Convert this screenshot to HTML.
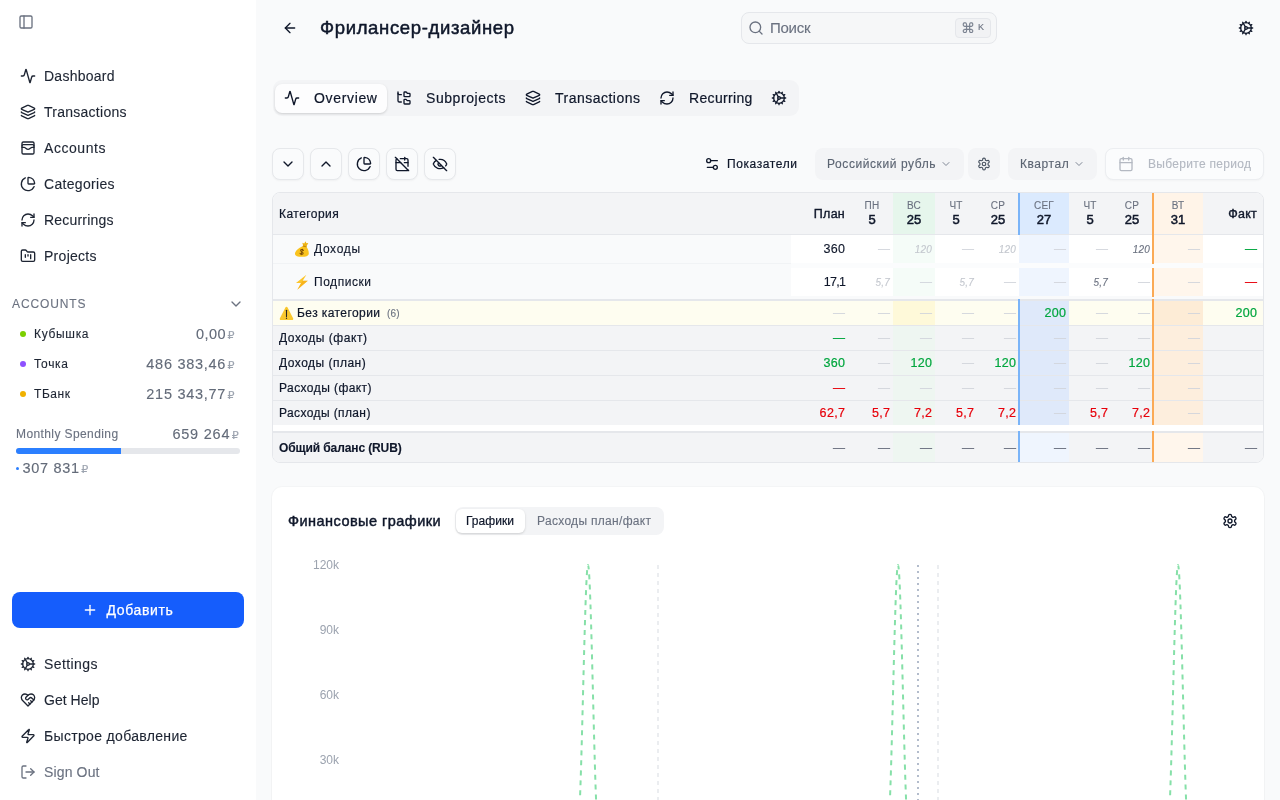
<!DOCTYPE html>
<html lang="ru">
<head>
<meta charset="utf-8">
<title>Фрилансер-дизайнер</title>
<style>
*{box-sizing:border-box;margin:0;padding:0}
html,body{width:1280px;height:800px;overflow:hidden}
#sb,#main{will-change:transform}
body{font-family:"Liberation Sans","DejaVu Sans",sans-serif;background:#f9fafb;color:#0f172a;position:relative;font-size:14px;-webkit-text-stroke:.12px}
svg.i{fill:none;stroke:currentColor;stroke-width:2;stroke-linecap:round;stroke-linejoin:round;display:block}
.abs{position:absolute}
/* sidebar */
#sb{position:absolute;left:0;top:0;width:256px;height:800px;background:#fff}
.nav{position:absolute;left:12px;width:232px;height:32px;display:flex;align-items:center;padding-left:8px;font-size:14px;color:#1e2533;white-space:nowrap}
.nav svg{width:16px;height:16px;margin-right:8px;flex:none}
.nav span{display:inline-block}
.acc{position:absolute;left:12px;width:232px;height:30px;display:flex;align-items:center;font-size:12px;color:#1e2533;white-space:nowrap}
.acc .dot{width:6px;height:6px;border-radius:50%;margin-left:8px;margin-right:8px;flex:none}
.acc .amt{margin-left:auto;margin-right:9.5px;font-size:14.5px;color:#636b79}
.rub{font-size:11px;color:#9ca3af;margin-left:1.5px;letter-spacing:0}
/* main */
#main{position:absolute;left:256px;top:0;width:1024px;height:800px;background:#f9fafb}

.med{-webkit-text-stroke:.2px currentColor}
.bold{font-weight:bold}
.tb{border:1px solid #e6e8eb;border-radius:8px;background:#fafbfc;color:#0f172a;display:flex;align-items:center;justify-content:center;box-shadow:0 1px 2px rgba(0,0,0,.04)}
.c{font-size:12px;white-space:nowrap;color:#0f172a}
.c.hb{font-size:12.5px;letter-spacing:.25px;-webkit-text-stroke:.38px currentColor;color:#0f172a}
.c.dw{font-size:10px;color:#6b7280;letter-spacing:.2px}
.c.dn{font-size:13px;-webkit-text-stroke:.5px currentColor;color:#0f172a}
.c.v{color:#0f172a;font-size:12.5px;letter-spacing:.35px;margin-left:.35px}
.c.ds{color:#d1d5db}
.c.dd{color:#6b7280;-webkit-text-stroke:.3px currentColor}
.c.dg{color:#00a63e;-webkit-text-stroke:.3px currentColor}
.c.dr{color:#e7000b;-webkit-text-stroke:.3px currentColor}
.c.g{color:#00a63e;font-size:12.5px;letter-spacing:.35px;margin-left:.35px;-webkit-text-stroke:.2px currentColor}
.c.r{color:#e7000b;font-size:12.5px;letter-spacing:.35px;margin-left:.35px;-webkit-text-stroke:.2px currentColor}
.c.pi{padding-top:1px;font-style:italic;font-size:10px;color:#c4c8cf;letter-spacing:.2px}
.c.pf{padding-top:1px;font-style:italic;font-size:10px;color:#6b7280;letter-spacing:.2px}
.c.cnt{font-size:10px;color:#6b7280}
/*LS*/
#n1{letter-spacing:0.25px}
#n2{letter-spacing:0.26px}
#n3{letter-spacing:0.56px}
#n4{letter-spacing:0.31px}
#n5{letter-spacing:0.2px}
#n6{letter-spacing:0.28px}
#acclbl{letter-spacing:0.88px}
#a1{letter-spacing:0.68px}
#a2{letter-spacing:0.69px}
#a3{letter-spacing:0.56px}
#ms{letter-spacing:0.4px}
#addb{letter-spacing:0.66px}
#b1{letter-spacing:0.4px}
#b2{letter-spacing:0.03px}
#b3{letter-spacing:0.33px}
#b4{letter-spacing:0.14px}
#title{letter-spacing:0.65px}
#srch{letter-spacing:-0.27px}
#t1{letter-spacing:0.66px}
#t2{letter-spacing:0.56px}
#t3{letter-spacing:0.49px}
#t4{letter-spacing:0.34px}
#pok{letter-spacing:0.6px}
#cur{letter-spacing:0.58px}
#kv{letter-spacing:0.57px}
#per{letter-spacing:0.3px}
#hcat{letter-spacing:0.46px}
#r1{letter-spacing:0.66px}
#r2{letter-spacing:0.54px}
#r3{letter-spacing:0.42px}
#r3c{letter-spacing:0.13px}
#s0{letter-spacing:0.54px}
#s1{letter-spacing:0.49px}
#s2{letter-spacing:0.43px}
#s3{letter-spacing:0.39px}
#tot{letter-spacing:-0.11px}
#ctitle{letter-spacing:0.46px}
#ct1{letter-spacing:0.05px}
#ct2{letter-spacing:0.31px}
#am1{letter-spacing:0.42px}
#am2{letter-spacing:0.71px}
#am3{letter-spacing:0.71px}
#msv1{letter-spacing:0.76px}
#ms21{letter-spacing:0.68px}
#v171{letter-spacing:-0.7px}
/*/LS*/
</style>
</head>
<body>
<div id="sb">
  <svg class="i abs" style="left:18px;top:14px;width:16px;height:16px;color:#6b7280" viewBox="0 0 24 24"><rect width="18" height="18" x="3" y="3" rx="2"/><path d="M9 3v18"/></svg>

  <div class="nav" style="top:60px"><svg class="i" viewBox="0 0 24 24"><path d="M22 12h-2.480a2 2 0 0 0-1.930 1.460l-2.350 8.360a.25.25 0 0 1-.480 0L9.240 2.180a.25.25 0 0 0-.480 0l-2.350 8.360A2 2 0 0 1 4.490 12H2"/></svg><span id="n1">Dashboard</span></div>
  <div class="nav" style="top:96px"><svg class="i" viewBox="0 0 24 24"><path d="M12.830 2.180a2 2 0 0 0-1.660 0L2.600 6.080a1 1 0 0 0 0 1.830l8.580 3.910a2 2 0 0 0 1.660 0l8.580-3.900a1 1 0 0 0 0-1.830z"/><path d="M2 12a1 1 0 0 0 .58.910l8.600 3.910a2 2 0 0 0 1.650 0l8.580-3.900A1 1 0 0 0 22 12"/><path d="M2 17a1 1 0 0 0 .58.910l8.600 3.910a2 2 0 0 0 1.650 0l8.580-3.900A1 1 0 0 0 22 17"/></svg><span id="n2">Transactions</span></div>
  <div class="nav" style="top:132px"><svg class="i" viewBox="0 0 24 24"><rect width="18" height="18" x="3" y="3" rx="2"/><path d="M3 9a2 2 0 0 1 2-2h14a2 2 0 0 1 2 2"/><path d="M3 11h3c.8 0 1.600.3 2.100.9l1.100.9c1.600 1.600 4.100 1.600 5.700 0l1.100-.9c.5-.5 1.300-.9 2.100-.9H21"/></svg><span id="n3">Accounts</span></div>
  <div class="nav" style="top:168px"><svg class="i" viewBox="0 0 24 24"><path d="M21 12c.552 0 1.005-.449.950-.998a10 10 0 0 0-8.953-8.951c-.550-.055-.998.398-.998.950v8a1 1 0 0 0 1 1z"/><path d="M21.210 15.890A10 10 0 1 1 8 2.830"/></svg><span id="n4">Categories</span></div>
  <div class="nav" style="top:204px"><svg class="i" viewBox="0 0 24 24"><path d="M3 12a9 9 0 0 1 9-9 9.750 9.750 0 0 1 6.740 2.740L21 8"/><path d="M21 3v5h-5"/><path d="M21 12a9 9 0 0 1-9 9 9.750 9.750 0 0 1-6.740-2.740L3 16"/><path d="M8 16H3v5"/></svg><span id="n5">Recurrings</span></div>
  <div class="nav" style="top:240px"><svg class="i" viewBox="0 0 24 24"><path d="M4 20h16a2 2 0 0 0 2-2V8a2 2 0 0 0-2-2h-7.930a2 2 0 0 1-1.660-.9l-.820-1.200A2 2 0 0 0 7.930 3H4a2 2 0 0 0-2 2v13c0 1.100.9 2 2 2Z"/><path d="M8 10v4"/><path d="M12 10v2"/><path d="M16 10v6"/></svg><span id="n6">Projects</span></div>

  <div class="abs" id="acclbl" style="left:12px;top:296px;font-size:12px;color:#6b7280;line-height:16px">ACCOUNTS</div>
  <svg class="i abs" style="left:228px;top:296px;width:16px;height:16px;color:#6b7280;stroke-width:2" viewBox="0 0 24 24"><path d="m6 9 6 6 6-6"/></svg>

  <div class="acc" style="top:319px"><i class="dot" style="background:#7ccf00"></i><span id="a1">Кубышка</span><span class="amt"><span id="am1">0,00</span><span class="rub">₽</span></span></div>
  <div class="acc" style="top:349px"><i class="dot" style="background:#8e51ff"></i><span id="a2">Точка</span><span class="amt"><span id="am2">486 383,46</span><span class="rub">₽</span></span></div>
  <div class="acc" style="top:379px"><i class="dot" style="background:#f0b100"></i><span id="a3">ТБанк</span><span class="amt"><span id="am3">215 343,77</span><span class="rub">₽</span></span></div>

  <div class="abs" id="ms" style="left:16px;top:426px;font-size:12px;color:#6b7280;line-height:16px">Monthly Spending</div>
  <div class="abs" id="msv" style="right:17.3px;top:424px;font-size:14.5px;color:#636b79;line-height:20px;white-space:nowrap"><span id="msv1">659 264</span><span class="rub">₽</span></div>
  <div class="abs" style="left:16px;top:448px;width:224px;height:6px;border-radius:3px;background:#e5e7eb;overflow:hidden"><div style="width:105px;height:6px;background:#2b7fff"></div></div>
  <div class="abs" style="left:16px;top:467px;width:3px;height:3px;border-radius:50%;background:#2b7fff"></div>
  <div class="abs" id="ms2" style="left:22.5px;top:458px;font-size:14.5px;color:#636b79;line-height:20px;white-space:nowrap"><span id="ms21">307 831</span><span class="rub">₽</span></div>

  <div class="abs" style="left:12px;top:592px;width:232px;height:36px;border-radius:8px;background:#155dfc;color:#fff;display:flex;align-items:center;justify-content:center;font-size:14px;-webkit-text-stroke:.25px #fff"><svg class="i" style="width:16px;height:16px;margin-right:8px" viewBox="0 0 24 24"><path d="M5 12h14"/><path d="M12 5v14"/></svg><span id="addb">Добавить</span></div>

  <div class="nav" style="top:648px"><svg class="i" viewBox="0 0 24 24"><path d="M12 20a8 8 0 1 0 0-16 8 8 0 0 0 0 16Z"/><path d="M12 14a2 2 0 1 0 0-4 2 2 0 0 0 0 4Z"/><path d="M12 2v2"/><path d="M12 22v-2"/><path d="m17 20.660-1-1.730"/><path d="M11 10.270 7 3.340"/><path d="m20.660 17-1.730-1"/><path d="m3.340 7 1.730 1"/><path d="M14 12h8"/><path d="M2 12h2"/><path d="m20.660 7-1.730 1"/><path d="m3.340 17 1.730-1"/><path d="m17 3.340-1 1.730"/><path d="m11 13.730-4 6.930"/></svg><span id="b1">Settings</span></div>
  <div class="nav" style="top:684px"><svg class="i" viewBox="0 0 24 24"><path d="M19 14c1.490-1.460 3-3.210 3-5.500A5.500 5.500 0 0 0 16.500 3c-1.760 0-3 .5-4.500 2-1.500-1.500-2.740-2-4.500-2A5.500 5.500 0 0 0 2 8.500c0 2.300 1.500 4.050 3 5.500l7 7Z"/><path d="M12 5 9.040 7.960a2.170 2.170 0 0 0 0 3.080c.820.820 2.130.850 3 .070l2.070-1.900a2.820 2.820 0 0 1 3.790 0l2.960 2.660"/><path d="m18 15-2-2"/><path d="m15 18-2-2"/></svg><span id="b2">Get Help</span></div>
  <div class="nav" style="top:720px"><svg class="i" viewBox="0 0 24 24"><path d="M4 14a1 1 0 0 1-.780-1.630l9.900-10.200a.5.5 0 0 1 .860.460l-1.920 6.020A1 1 0 0 0 13 10h7a1 1 0 0 1 .780 1.630l-9.900 10.200a.5.5 0 0 1-.860-.460l1.920-6.020A1 1 0 0 0 11 14z"/></svg><span id="b3">Быстрое добавление</span></div>
  <div class="nav" style="top:756px;color:#6b7280"><svg class="i" viewBox="0 0 24 24"><path d="M9 21H5a2 2 0 0 1-2-2V5a2 2 0 0 1 2-2h4"/><polyline points="16 17 21 12 16 7"/><line x1="21" x2="9" y1="12" y2="12"/></svg><span id="b4">Sign Out</span></div>
</div>

<div id="main">
<!--MAIN-->
<div class="abs" style="left:26px;top:20px;color:#0f172a"><svg class="i" style="width:16px;height:16px;" viewBox="0 0 24 24"><path d="m12 19-7-7 7-7"/><path d="M19 12H5"/></svg></div>
<div class="abs" id="title" style="left:64px;top:16px;font-size:18.5px;line-height:24px;-webkit-text-stroke:.5px #0f172a;color:#0f172a;white-space:nowrap">Фрилансер-дизайнер</div>
<div class="abs" style="left:485px;top:12px;width:256px;height:32px;border:1px solid #e5e7eb;border-radius:8px;background:#f6f7f8"></div>
<div class="abs" style="left:492px;top:20px;color:#6b7280"><svg class="i" style="width:16px;height:16px;" viewBox="0 0 24 24"><circle cx="11" cy="11" r="8"/><path d="m21 21-4.300-4.300"/></svg></div>
<div class="abs" id="srch" style="left:514px;top:18px;font-size:15px;line-height:20px;color:#6b7280;white-space:nowrap">Поиск</div>
<div class="abs" style="left:699px;top:18px;width:36px;height:20px;border:1px solid #e5e7eb;border-radius:4px;background:#f1f2f4;color:#6b7280;font-size:9px;line-height:18px;white-space:nowrap;padding-left:5px"><span style="font-family:'DejaVu Sans',sans-serif;font-size:14px;line-height:18px;vertical-align:-2px;color:#7a8290">⌘</span><span style="margin-left:3px;position:relative;top:-1px">K</span></div>
<div class="abs" style="left:982px;top:20px;color:#0f172a"><svg class="i" style="width:16px;height:16px;" viewBox="0 0 24 24"><path d="M12 20a8 8 0 1 0 0-16 8 8 0 0 0 0 16Z"/><path d="M12 14a2 2 0 1 0 0-4 2 2 0 0 0 0 4Z"/><path d="M12 2v2"/><path d="M12 22v-2"/><path d="m17 20.660-1-1.730"/><path d="M11 10.270 7 3.340"/><path d="m20.660 17-1.730-1"/><path d="m3.340 7 1.730 1"/><path d="M14 12h8"/><path d="M2 12h2"/><path d="m20.660 7-1.730 1"/><path d="m3.340 17 1.730-1"/><path d="m17 3.340-1 1.730"/><path d="m11 13.730-4 6.930"/></svg></div>
<div class="abs" style="left:17px;top:80px;width:526px;height:36px;border-radius:9px;background:#f3f4f6"></div>
<div class="abs" style="left:19px;top:84px;width:112px;height:29px;border-radius:7px;background:#fdfdfe;box-shadow:0 1px 3px rgba(0,0,0,.10),0 1px 2px rgba(0,0,0,.06)"></div>
<div class="abs" style="left:28px;top:90px;color:#0f172a"><svg class="i" style="width:16px;height:16px;" viewBox="0 0 24 24"><path d="M22 12h-2.480a2 2 0 0 0-1.930 1.460l-2.350 8.360a.25.25 0 0 1-.480 0L9.240 2.180a.25.25 0 0 0-.480 0l-2.350 8.360A2 2 0 0 1 4.490 12H2"/></svg></div>
<div class="abs med" id="t1" style="left:58px;top:88px;font-size:14px;line-height:20px;color:#0f172a;white-space:nowrap">Overview</div>
<div class="abs" style="left:140px;top:90px;color:#0f172a"><svg class="i" style="width:16px;height:16px;" viewBox="0 0 24 24"><path d="M20 10a1 1 0 0 0 1-1V6a1 1 0 0 0-1-1h-2.500a1 1 0 0 1-.8-.4l-.9-1.200A1 1 0 0 0 15 3h-2a1 1 0 0 0-1 1v5a1 1 0 0 0 1 1Z"/><path d="M20 21a1 1 0 0 0 1-1v-3a1 1 0 0 0-1-1h-2.900a1 1 0 0 1-.880-.550l-.420-.850a1 1 0 0 0-.920-.6H13a1 1 0 0 0-1 1v5a1 1 0 0 0 1 1Z"/><path d="M3 5a2 2 0 0 0 2 2h3"/><path d="M3 3v13a2 2 0 0 0 2 2h3"/></svg></div>
<div class="abs med" id="t2" style="left:170px;top:88px;font-size:14px;line-height:20px;color:#0f172a;white-space:nowrap">Subprojects</div>
<div class="abs" style="left:269px;top:90px;color:#0f172a"><svg class="i" style="width:16px;height:16px;" viewBox="0 0 24 24"><path d="M12.830 2.180a2 2 0 0 0-1.660 0L2.600 6.080a1 1 0 0 0 0 1.830l8.580 3.910a2 2 0 0 0 1.660 0l8.580-3.900a1 1 0 0 0 0-1.830z"/><path d="M2 12a1 1 0 0 0 .580.910l8.600 3.910a2 2 0 0 0 1.650 0l8.580-3.900A1 1 0 0 0 22 12"/><path d="M2 17a1 1 0 0 0 .580.910l8.600 3.910a2 2 0 0 0 1.650 0l8.580-3.900A1 1 0 0 0 22 17"/></svg></div>
<div class="abs med" id="t3" style="left:299px;top:88px;font-size:14px;line-height:20px;color:#0f172a;white-space:nowrap">Transactions</div>
<div class="abs" style="left:403px;top:90px;color:#0f172a"><svg class="i" style="width:16px;height:16px;" viewBox="0 0 24 24"><path d="M3 12a9 9 0 0 1 9-9 9.750 9.750 0 0 1 6.740 2.740L21 8"/><path d="M21 3v5h-5"/><path d="M21 12a9 9 0 0 1-9 9 9.750 9.750 0 0 1-6.740-2.740L3 16"/><path d="M8 16H3v5"/></svg></div>
<div class="abs med" id="t4" style="left:433px;top:88px;font-size:14px;line-height:20px;color:#0f172a;white-space:nowrap">Recurring</div>
<div class="abs" style="left:515px;top:90px;color:#0f172a"><svg class="i" style="width:16px;height:16px;" viewBox="0 0 24 24"><path d="M12 20a8 8 0 1 0 0-16 8 8 0 0 0 0 16Z"/><path d="M12 14a2 2 0 1 0 0-4 2 2 0 0 0 0 4Z"/><path d="M12 2v2"/><path d="M12 22v-2"/><path d="m17 20.660-1-1.730"/><path d="M11 10.270 7 3.340"/><path d="m20.660 17-1.730-1"/><path d="m3.340 7 1.730 1"/><path d="M14 12h8"/><path d="M2 12h2"/><path d="m20.660 7-1.730 1"/><path d="m3.340 17 1.730-1"/><path d="m17 3.340-1 1.730"/><path d="m11 13.730-4 6.930"/></svg></div>
<div class="abs tb" style="left:16px;top:148px;width:32px;height:32px;"><svg class="i" style="width:16px;height:16px;" viewBox="0 0 24 24"><path d="m6 9 6 6 6-6"/></svg></div>
<div class="abs tb" style="left:54px;top:148px;width:32px;height:32px;"><svg class="i" style="width:16px;height:16px;" viewBox="0 0 24 24"><path d="m18 15-6-6-6 6"/></svg></div>
<div class="abs tb" style="left:92px;top:148px;width:32px;height:32px;"><svg class="i" style="width:16px;height:16px;" viewBox="0 0 24 24"><path d="M21 12c.552 0 1.005-.449.950-.998a10 10 0 0 0-8.953-8.951c-.550-.055-.998.398-.998.950v8a1 1 0 0 0 1 1z"/><path d="M21.210 15.890A10 10 0 1 1 8 2.830"/></svg></div>
<div class="abs tb" style="left:130px;top:148px;width:32px;height:32px;"><svg class="i" style="width:16px;height:16px;" viewBox="0 0 24 24"><path d="M4.200 4.200A2 2 0 0 0 3 6v14a2 2 0 0 0 2 2h14a2 2 0 0 0 1.820-1.180"/><path d="M21 15.500V6a2 2 0 0 0-2-2H9.500"/><path d="M16 2v4"/><path d="M3 10h7"/><path d="M21 10h-5.500"/><path d="m2 2 20 20"/></svg></div>
<div class="abs tb" style="left:168px;top:148px;width:32px;height:32px;"><svg class="i" style="width:16px;height:16px;" viewBox="0 0 24 24"><path d="M10.733 5.076a10.744 10.744 0 0 1 11.205 6.575 1 1 0 0 1 0 .696 10.747 10.747 0 0 1-1.444 2.490"/><path d="M14.084 14.158a3 3 0 0 1-4.242-4.242"/><path d="M17.479 17.499a10.750 10.750 0 0 1-15.417-5.151 1 1 0 0 1 0-.696 10.750 10.750 0 0 1 4.446-5.143"/><path d="m2 2 20 20"/></svg></div>
<div class="abs" style="left:448px;top:156px;color:#0f172a"><svg class="i" style="width:16px;height:16px;" viewBox="0 0 24 24"><path d="M20 7h-9"/><path d="M14 17H5"/><circle cx="17" cy="17" r="3"/><circle cx="7" cy="7" r="3"/></svg></div>
<div class="abs med" id="pok" style="left:471px;top:156px;font-size:12px;line-height:16px;color:#0f172a;white-space:nowrap">Показатели</div>
<div class="abs" style="left:559px;top:148px;width:149px;height:32px;border-radius:8px;background:#f3f4f6"></div>
<div class="abs" id="cur" style="left:571px;top:156px;font-size:12px;line-height:16px;color:#5b6472;white-space:nowrap">Российский рубль</div>
<div class="abs" style="left:684px;top:158px;color:#7f8795"><svg class="i" style="width:12px;height:12px;" viewBox="0 0 24 24"><path d="m6 9 6 6 6-6"/></svg></div>
<div class="abs" style="left:712px;top:148px;width:32px;height:32px;border-radius:8px;background:#f3f4f6;color:#4b5563;display:flex;align-items:center;justify-content:center"><svg class="i" style="width:14px;height:14px;" viewBox="0 0 24 24"><path d="M12.220 2h-.440a2 2 0 0 0-2 2v.180a2 2 0 0 1-1 1.730l-.430.250a2 2 0 0 1-2 0l-.150-.080a2 2 0 0 0-2.730.730l-.220.380a2 2 0 0 0 .730 2.730l.150.100a2 2 0 0 1 1 1.720v.510a2 2 0 0 1-1 1.740l-.150.090a2 2 0 0 0-.730 2.730l.220.380a2 2 0 0 0 2.730.730l.150-.080a2 2 0 0 1 2 0l.430.250a2 2 0 0 1 1 1.730V20a2 2 0 0 0 2 2h.440a2 2 0 0 0 2-2v-.180a2 2 0 0 1 1-1.730l.430-.250a2 2 0 0 1 2 0l.150.080a2 2 0 0 0 2.730-.730l.220-.390a2 2 0 0 0-.730-2.730l-.150-.080a2 2 0 0 1-1-1.740v-.500a2 2 0 0 1 1-1.740l.150-.090a2 2 0 0 0 .730-2.730l-.220-.380a2 2 0 0 0-2.730-.730l-.150.080a2 2 0 0 1-2 0l-.430-.250a2 2 0 0 1-1-1.730V4a2 2 0 0 0-2-2z"/><circle cx="12" cy="12" r="3"/></svg></div>
<div class="abs" style="left:752px;top:148px;width:89px;height:32px;border-radius:8px;background:#f3f4f6"></div>
<div class="abs" id="kv" style="left:764px;top:156px;font-size:12px;line-height:16px;color:#5b6472;white-space:nowrap">Квартал</div>
<div class="abs" style="left:817px;top:158px;color:#7f8795"><svg class="i" style="width:12px;height:12px;" viewBox="0 0 24 24"><path d="m6 9 6 6 6-6"/></svg></div>
<div class="abs" style="left:849px;top:148px;width:159px;height:32px;border-radius:8px;background:#fbfcfd;border:1px solid #eceef1;box-shadow:0 1px 2px rgba(0,0,0,.03)"></div>
<div class="abs" style="left:862px;top:156px;color:#b4b9c2"><svg class="i" style="width:16px;height:16px;" viewBox="0 0 24 24"><path d="M8 2v4"/><path d="M16 2v4"/><rect width="18" height="18" x="3" y="4" rx="2"/><path d="M3 10h18"/></svg></div>
<div class="abs" id="per" style="left:892px;top:156px;font-size:12px;line-height:16px;color:#b4b9c2;white-space:nowrap">Выберите период</div>
<div class="abs" id="tbl" style="left:16px;top:192px;width:992px;height:271px;border:1px solid #e5e7eb;border-radius:8px;background:#fff;overflow:hidden"><div style="position:absolute;left:-17px;top:-193px;width:1024px;height:800px">
<div class="abs" style="left:16px;top:193px;width:992px;height:41px;background:#f3f4f6;"></div>
<div class="abs" style="left:637px;top:193px;width:42px;height:41px;background:#e6f6ec;"></div>
<div class="abs" style="left:763px;top:193px;width:50px;height:41px;background:#dbeafe;"></div>
<div class="abs" style="left:897px;top:193px;width:50px;height:41px;background:#fff4e8;"></div>
<div class="abs" style="left:16px;top:234px;width:992px;height:1px;background:#e5e7eb;"></div>
<div class="abs" style="left:16px;top:235px;width:519px;height:33px;background:#f9fafb;"></div>
<div class="abs" style="left:535px;top:235px;width:473px;height:28px;background:#ffffff;"></div>
<div class="abs" style="left:535px;top:263px;width:473px;height:5px;background:#fbfcfd;"></div>
<div class="abs" style="left:637px;top:235px;width:42px;height:28px;background:#f5fcf8;"></div>
<div class="abs" style="left:763px;top:235px;width:50px;height:28px;background:#eff5fe;"></div>
<div class="abs" style="left:897px;top:235px;width:50px;height:28px;background:#fff6ec;"></div>
<div class="abs" style="left:16px;top:268px;width:519px;height:33px;background:#f9fafb;"></div>
<div class="abs" style="left:535px;top:268px;width:473px;height:28px;background:#ffffff;"></div>
<div class="abs" style="left:535px;top:296px;width:473px;height:5px;background:#fbfcfd;"></div>
<div class="abs" style="left:637px;top:268px;width:42px;height:28px;background:#f5fcf8;"></div>
<div class="abs" style="left:763px;top:268px;width:50px;height:28px;background:#eff5fe;"></div>
<div class="abs" style="left:897px;top:268px;width:50px;height:28px;background:#fff6ec;"></div>
<div class="abs" style="left:16px;top:263px;width:519px;height:1px;background:#f1f3f5;"></div>
<div class="abs" style="left:16px;top:296px;width:992px;height:3px;background:#f9fafb;"></div>
<div class="abs" style="left:16px;top:299px;width:992px;height:2px;background:#e5e7eb;"></div>
<div class="abs" style="left:16px;top:301px;width:992px;height:24px;background:#fefdf0;"></div>
<div class="abs" style="left:637px;top:301px;width:42px;height:24px;background:#fef9d9;"></div>
<div class="abs" style="left:763px;top:301px;width:50px;height:24px;background:#dfe9fa;"></div>
<div class="abs" style="left:897px;top:301px;width:50px;height:24px;background:#fdecd6;"></div>
<div class="abs" style="left:16px;top:325px;width:992px;height:1px;background:#e5e7eb;"></div>
<div class="abs" style="left:16px;top:326px;width:992px;height:24px;background:#f3f4f6;"></div>
<div class="abs" style="left:637px;top:326px;width:42px;height:24px;background:#eef6f1;"></div>
<div class="abs" style="left:763px;top:326px;width:50px;height:24px;background:#dfe9fa;"></div>
<div class="abs" style="left:897px;top:326px;width:50px;height:24px;background:#fdeedd;"></div>
<div class="abs" style="left:16px;top:350px;width:992px;height:1px;background:#e5e7eb;"></div>
<div class="abs" style="left:16px;top:351px;width:992px;height:24px;background:#f3f4f6;"></div>
<div class="abs" style="left:637px;top:351px;width:42px;height:24px;background:#eef6f1;"></div>
<div class="abs" style="left:763px;top:351px;width:50px;height:24px;background:#dfe9fa;"></div>
<div class="abs" style="left:897px;top:351px;width:50px;height:24px;background:#fdeedd;"></div>
<div class="abs" style="left:16px;top:375px;width:992px;height:1px;background:#e5e7eb;"></div>
<div class="abs" style="left:16px;top:376px;width:992px;height:24px;background:#f3f4f6;"></div>
<div class="abs" style="left:637px;top:376px;width:42px;height:24px;background:#eef6f1;"></div>
<div class="abs" style="left:763px;top:376px;width:50px;height:24px;background:#dfe9fa;"></div>
<div class="abs" style="left:897px;top:376px;width:50px;height:24px;background:#fdeedd;"></div>
<div class="abs" style="left:16px;top:400px;width:992px;height:1px;background:#e5e7eb;"></div>
<div class="abs" style="left:16px;top:401px;width:992px;height:24px;background:#f3f4f6;"></div>
<div class="abs" style="left:637px;top:401px;width:42px;height:24px;background:#eef6f1;"></div>
<div class="abs" style="left:763px;top:401px;width:50px;height:24px;background:#dfe9fa;"></div>
<div class="abs" style="left:897px;top:401px;width:50px;height:24px;background:#fdeedd;"></div>
<div class="abs" style="left:16px;top:425px;width:992px;height:6px;background:#ffffff;"></div>
<div class="abs" style="left:16px;top:431px;width:992px;height:2px;background:#e5e7eb;"></div>
<div class="abs" style="left:16px;top:433px;width:992px;height:30px;background:#f3f4f6;"></div>
<div class="abs" style="left:637px;top:433px;width:42px;height:30px;background:#eef6f1;"></div>
<div class="abs" style="left:763px;top:433px;width:50px;height:30px;background:#eff5fe;"></div>
<div class="abs" style="left:897px;top:433px;width:50px;height:30px;background:#fff6ec;"></div>
<div class="abs" style="left:762px;top:193px;width:2px;height:42px;background:#7ab4f8;"></div>
<div class="abs" style="left:762px;top:299px;width:2px;height:126px;background:#7ab4f8;"></div>
<div class="abs" style="left:762px;top:431px;width:2px;height:32px;background:#7ab4f8;"></div>
<div class="abs" style="left:896px;top:193px;width:2px;height:71px;background:#fbaa55;"></div>
<div class="abs" style="left:896px;top:268px;width:2px;height:29px;background:#fbaa55;"></div>
<div class="abs" style="left:896px;top:299px;width:2px;height:126px;background:#fbaa55;"></div>
<div class="abs" style="left:896px;top:431px;width:2px;height:32px;background:#fbaa55;"></div>
<div class="abs c med hd" style="left:16px;top:206px;width:519px;height:16px;line-height:16px;text-align:left;padding-left:7px;"><span id="hcat">Категория</span></div>
<div class="abs c hb" style="left:535px;top:206px;width:60px;height:16px;line-height:16px;text-align:right;padding-right:6px;"><span id="hplan">План</span></div>
<div class="abs c hb" style="left:947px;top:206px;width:61px;height:16px;line-height:16px;text-align:right;padding-right:7px;"><span id="hfact">Факт</span></div>
<div class="abs c dw" style="left:595px;top:199.5px;width:42px;height:12px;line-height:12px;text-align:center;">ПН</div>
<div class="abs c dn" style="left:595px;top:212px;width:42px;height:16px;line-height:16px;text-align:center;">5</div>
<div class="abs c dw" style="left:637px;top:199.5px;width:42px;height:12px;line-height:12px;text-align:center;">ВС</div>
<div class="abs c dn" style="left:637px;top:212px;width:42px;height:16px;line-height:16px;text-align:center;">25</div>
<div class="abs c dw" style="left:679px;top:199.5px;width:42px;height:12px;line-height:12px;text-align:center;">ЧТ</div>
<div class="abs c dn" style="left:679px;top:212px;width:42px;height:16px;line-height:16px;text-align:center;">5</div>
<div class="abs c dw" style="left:721px;top:199.5px;width:42px;height:12px;line-height:12px;text-align:center;">СР</div>
<div class="abs c dn" style="left:721px;top:212px;width:42px;height:16px;line-height:16px;text-align:center;">25</div>
<div class="abs c dw" style="left:763px;top:199.5px;width:50px;height:12px;line-height:12px;text-align:center;">СЕГ</div>
<div class="abs c dn" style="left:763px;top:212px;width:50px;height:16px;line-height:16px;text-align:center;">27</div>
<div class="abs c dw" style="left:813px;top:199.5px;width:42px;height:12px;line-height:12px;text-align:center;">ЧТ</div>
<div class="abs c dn" style="left:813px;top:212px;width:42px;height:16px;line-height:16px;text-align:center;">5</div>
<div class="abs c dw" style="left:855px;top:199.5px;width:42px;height:12px;line-height:12px;text-align:center;">СР</div>
<div class="abs c dn" style="left:855px;top:212px;width:42px;height:16px;line-height:16px;text-align:center;">25</div>
<div class="abs c dw" style="left:897px;top:199.5px;width:50px;height:12px;line-height:12px;text-align:center;">ВТ</div>
<div class="abs c dn" style="left:897px;top:212px;width:50px;height:16px;line-height:16px;text-align:center;">31</div>
<div class="abs" style="left:38px;top:240px;width:16px;height:17px"><svg viewBox="0 0 16 17" width="16" height="17" style="display:block"><path d="M9.300 5.900 8.300 2.700l2 .8 1.100-2.300 1 2.100 1.900-.3-1.900 3.500z" fill="#eeb211"/><path d="M9.300 6.100C6 7.200 1.200 10.400 1 13.600c-.1 2.400 2.500 3.200 6.800 3.200 4.500 0 7-1 7-3.400 0-2.800-1.300-5.200-2.600-6.800z" fill="#fac31e"/><path d="M9.200 6.100l3.100.6" stroke="#c88c05" stroke-width="1.100" stroke-linecap="round"/><g transform="rotate(14 7.800 12)"><path d="M9.400 10.400c-.4-.6-1-.8-1.600-.8-.9 0-1.600.4-1.600 1.100 0 1.600 3.300.8 3.300 2.400 0 .7-.7 1.200-1.700 1.200-.7 0-1.400-.3-1.700-.9M7.800 8.700v6.600" fill="none" stroke="#7a4b06" stroke-width=".95"/></g></svg></div>
<div class="abs c nm" style="left:58px;top:241px;width:477px;height:16px;line-height:16px;text-align:left;padding-left:0px;"><span id="r1">Доходы</span></div>
<div class="abs c v" style="left:535px;top:241px;width:60px;height:16px;line-height:16px;text-align:right;padding-right:6px;"><span id="v360">360</span></div>
<div class="abs c ds" style="left:595px;top:241px;width:42px;height:16px;line-height:16px;text-align:right;padding-right:3px;">—</div>
<div class="abs c pi" style="left:637px;top:241px;width:42px;height:16px;line-height:16px;text-align:right;padding-right:3px;">120</div>
<div class="abs c ds" style="left:679px;top:241px;width:42px;height:16px;line-height:16px;text-align:right;padding-right:3px;">—</div>
<div class="abs c pi" style="left:721px;top:241px;width:42px;height:16px;line-height:16px;text-align:right;padding-right:3px;">120</div>
<div class="abs c ds" style="left:763px;top:241px;width:50px;height:16px;line-height:16px;text-align:right;padding-right:3px;">—</div>
<div class="abs c ds" style="left:813px;top:241px;width:42px;height:16px;line-height:16px;text-align:right;padding-right:3px;">—</div>
<div class="abs c pf" style="left:855px;top:241px;width:42px;height:16px;line-height:16px;text-align:right;padding-right:3px;">120</div>
<div class="abs c ds" style="left:897px;top:241px;width:50px;height:16px;line-height:16px;text-align:right;padding-right:3px;">—</div>
<div class="abs c dg" style="left:947px;top:241px;width:61px;height:16px;line-height:16px;text-align:right;padding-right:7px;">—</div>
<div class="abs" style="left:38px;top:274px;width:16px;height:16px"><svg viewBox="0 0 16 16" width="16" height="16" style="display:block"><path d="M12.400.8 2 9h5L3.300 15.800 13.800 6.800H8.700z" fill="#fcc52a"/><path d="M13.800 6.800 3.300 15.800 7.600 8.400l1.100-1.600z" fill="#f59e0b" opacity=".45"/></svg></div>
<div class="abs c nm" style="left:58px;top:274px;width:477px;height:16px;line-height:16px;text-align:left;padding-left:0px;"><span id="r2">Подписки</span></div>
<div class="abs c v" style="left:535px;top:274px;width:60px;height:16px;line-height:16px;text-align:right;padding-right:6px;"><span id="v171">17,1</span></div>
<div class="abs c pi" style="left:595px;top:274px;width:42px;height:16px;line-height:16px;text-align:right;padding-right:3px;">5,7</div>
<div class="abs c ds" style="left:637px;top:274px;width:42px;height:16px;line-height:16px;text-align:right;padding-right:3px;">—</div>
<div class="abs c pi" style="left:679px;top:274px;width:42px;height:16px;line-height:16px;text-align:right;padding-right:3px;">5,7</div>
<div class="abs c ds" style="left:721px;top:274px;width:42px;height:16px;line-height:16px;text-align:right;padding-right:3px;">—</div>
<div class="abs c ds" style="left:763px;top:274px;width:50px;height:16px;line-height:16px;text-align:right;padding-right:3px;">—</div>
<div class="abs c pf" style="left:813px;top:274px;width:42px;height:16px;line-height:16px;text-align:right;padding-right:3px;">5,7</div>
<div class="abs c ds" style="left:855px;top:274px;width:42px;height:16px;line-height:16px;text-align:right;padding-right:3px;">—</div>
<div class="abs c ds" style="left:897px;top:274px;width:50px;height:16px;line-height:16px;text-align:right;padding-right:3px;">—</div>
<div class="abs c dr" style="left:947px;top:274px;width:61px;height:16px;line-height:16px;text-align:right;padding-right:7px;">—</div>
<div class="abs" style="left:23px;top:305.5px;width:15px;height:15px"><svg viewBox="0 0 15 15" width="15" height="15" style="display:block"><path d="M6.400 1.500.9 12.200c-.5.900.1 1.900 1.100 1.900h11c1 0 1.600-1 1.100-1.900L8.600 1.500c-.5-.9-1.700-.9-2.200 0z" fill="#f9c72e"/><path d="M7.500 4.300v6.200" stroke="#2b2620" stroke-width="1.100" stroke-linecap="round"/><circle cx="7.500" cy="12.300" r=".7" fill="#2b2620"/></svg></div>
<div class="abs c med nm" style="left:41px;top:305px;width:494px;height:16px;line-height:16px;text-align:left;padding-left:0px;"><span id="r3">Без категории</span></div>
<div class="abs c cnt" style="left:131px;top:305.5px;width:33px;height:16px;line-height:16px;text-align:left;padding-left:0px;"><span id="r3c">(6)</span></div>
<div class="abs c ds" style="left:535px;top:305px;width:60px;height:16px;line-height:16px;text-align:right;padding-right:6px;">—</div>
<div class="abs c ds" style="left:595px;top:305px;width:42px;height:16px;line-height:16px;text-align:right;padding-right:3px;">—</div>
<div class="abs c ds" style="left:637px;top:305px;width:42px;height:16px;line-height:16px;text-align:right;padding-right:3px;">—</div>
<div class="abs c ds" style="left:679px;top:305px;width:42px;height:16px;line-height:16px;text-align:right;padding-right:3px;">—</div>
<div class="abs c ds" style="left:721px;top:305px;width:42px;height:16px;line-height:16px;text-align:right;padding-right:3px;">—</div>
<div class="abs c g" style="left:763px;top:305px;width:50px;height:16px;line-height:16px;text-align:right;padding-right:3px;">200</div>
<div class="abs c ds" style="left:813px;top:305px;width:42px;height:16px;line-height:16px;text-align:right;padding-right:3px;">—</div>
<div class="abs c ds" style="left:855px;top:305px;width:42px;height:16px;line-height:16px;text-align:right;padding-right:3px;">—</div>
<div class="abs c ds" style="left:897px;top:305px;width:50px;height:16px;line-height:16px;text-align:right;padding-right:3px;">—</div>
<div class="abs c g" style="left:947px;top:305px;width:61px;height:16px;line-height:16px;text-align:right;padding-right:7px;">200</div>
<div class="abs c med nm" style="left:16px;top:330px;width:519px;height:16px;line-height:16px;text-align:left;padding-left:7px;"><span id="s0">Доходы (факт)</span></div>
<div class="abs c dg" style="left:535px;top:330px;width:60px;height:16px;line-height:16px;text-align:right;padding-right:6px;">—</div>
<div class="abs c ds" style="left:595px;top:330px;width:42px;height:16px;line-height:16px;text-align:right;padding-right:3px;">—</div>
<div class="abs c ds" style="left:637px;top:330px;width:42px;height:16px;line-height:16px;text-align:right;padding-right:3px;">—</div>
<div class="abs c ds" style="left:679px;top:330px;width:42px;height:16px;line-height:16px;text-align:right;padding-right:3px;">—</div>
<div class="abs c ds" style="left:721px;top:330px;width:42px;height:16px;line-height:16px;text-align:right;padding-right:3px;">—</div>
<div class="abs c ds" style="left:763px;top:330px;width:50px;height:16px;line-height:16px;text-align:right;padding-right:3px;">—</div>
<div class="abs c ds" style="left:813px;top:330px;width:42px;height:16px;line-height:16px;text-align:right;padding-right:3px;">—</div>
<div class="abs c ds" style="left:855px;top:330px;width:42px;height:16px;line-height:16px;text-align:right;padding-right:3px;">—</div>
<div class="abs c ds" style="left:897px;top:330px;width:50px;height:16px;line-height:16px;text-align:right;padding-right:3px;">—</div>
<div class="abs c " style="left:947px;top:330px;width:61px;height:16px;line-height:16px;text-align:right;padding-right:7px;"></div>
<div class="abs c med nm" style="left:16px;top:355px;width:519px;height:16px;line-height:16px;text-align:left;padding-left:7px;"><span id="s1">Доходы (план)</span></div>
<div class="abs c g" style="left:535px;top:355px;width:60px;height:16px;line-height:16px;text-align:right;padding-right:6px;">360</div>
<div class="abs c ds" style="left:595px;top:355px;width:42px;height:16px;line-height:16px;text-align:right;padding-right:3px;">—</div>
<div class="abs c g" style="left:637px;top:355px;width:42px;height:16px;line-height:16px;text-align:right;padding-right:3px;">120</div>
<div class="abs c ds" style="left:679px;top:355px;width:42px;height:16px;line-height:16px;text-align:right;padding-right:3px;">—</div>
<div class="abs c g" style="left:721px;top:355px;width:42px;height:16px;line-height:16px;text-align:right;padding-right:3px;">120</div>
<div class="abs c ds" style="left:763px;top:355px;width:50px;height:16px;line-height:16px;text-align:right;padding-right:3px;">—</div>
<div class="abs c ds" style="left:813px;top:355px;width:42px;height:16px;line-height:16px;text-align:right;padding-right:3px;">—</div>
<div class="abs c g" style="left:855px;top:355px;width:42px;height:16px;line-height:16px;text-align:right;padding-right:3px;">120</div>
<div class="abs c ds" style="left:897px;top:355px;width:50px;height:16px;line-height:16px;text-align:right;padding-right:3px;">—</div>
<div class="abs c " style="left:947px;top:355px;width:61px;height:16px;line-height:16px;text-align:right;padding-right:7px;"></div>
<div class="abs c med nm" style="left:16px;top:380px;width:519px;height:16px;line-height:16px;text-align:left;padding-left:7px;"><span id="s2">Расходы (факт)</span></div>
<div class="abs c dr" style="left:535px;top:380px;width:60px;height:16px;line-height:16px;text-align:right;padding-right:6px;">—</div>
<div class="abs c ds" style="left:595px;top:380px;width:42px;height:16px;line-height:16px;text-align:right;padding-right:3px;">—</div>
<div class="abs c ds" style="left:637px;top:380px;width:42px;height:16px;line-height:16px;text-align:right;padding-right:3px;">—</div>
<div class="abs c ds" style="left:679px;top:380px;width:42px;height:16px;line-height:16px;text-align:right;padding-right:3px;">—</div>
<div class="abs c ds" style="left:721px;top:380px;width:42px;height:16px;line-height:16px;text-align:right;padding-right:3px;">—</div>
<div class="abs c ds" style="left:763px;top:380px;width:50px;height:16px;line-height:16px;text-align:right;padding-right:3px;">—</div>
<div class="abs c ds" style="left:813px;top:380px;width:42px;height:16px;line-height:16px;text-align:right;padding-right:3px;">—</div>
<div class="abs c ds" style="left:855px;top:380px;width:42px;height:16px;line-height:16px;text-align:right;padding-right:3px;">—</div>
<div class="abs c ds" style="left:897px;top:380px;width:50px;height:16px;line-height:16px;text-align:right;padding-right:3px;">—</div>
<div class="abs c " style="left:947px;top:380px;width:61px;height:16px;line-height:16px;text-align:right;padding-right:7px;"></div>
<div class="abs c med nm" style="left:16px;top:405px;width:519px;height:16px;line-height:16px;text-align:left;padding-left:7px;"><span id="s3">Расходы (план)</span></div>
<div class="abs c r" style="left:535px;top:405px;width:60px;height:16px;line-height:16px;text-align:right;padding-right:6px;">62,7</div>
<div class="abs c r" style="left:595px;top:405px;width:42px;height:16px;line-height:16px;text-align:right;padding-right:3px;">5,7</div>
<div class="abs c r" style="left:637px;top:405px;width:42px;height:16px;line-height:16px;text-align:right;padding-right:3px;">7,2</div>
<div class="abs c r" style="left:679px;top:405px;width:42px;height:16px;line-height:16px;text-align:right;padding-right:3px;">5,7</div>
<div class="abs c r" style="left:721px;top:405px;width:42px;height:16px;line-height:16px;text-align:right;padding-right:3px;">7,2</div>
<div class="abs c ds" style="left:763px;top:405px;width:50px;height:16px;line-height:16px;text-align:right;padding-right:3px;">—</div>
<div class="abs c r" style="left:813px;top:405px;width:42px;height:16px;line-height:16px;text-align:right;padding-right:3px;">5,7</div>
<div class="abs c r" style="left:855px;top:405px;width:42px;height:16px;line-height:16px;text-align:right;padding-right:3px;">7,2</div>
<div class="abs c ds" style="left:897px;top:405px;width:50px;height:16px;line-height:16px;text-align:right;padding-right:3px;">—</div>
<div class="abs c " style="left:947px;top:405px;width:61px;height:16px;line-height:16px;text-align:right;padding-right:7px;"></div>
<div class="abs c bold nm" style="left:16px;top:440px;width:519px;height:16px;line-height:16px;text-align:left;padding-left:7px;"><span id="tot">Общий баланс (RUB)</span></div>
<div class="abs c dd" style="left:535px;top:440px;width:60px;height:16px;line-height:16px;text-align:right;padding-right:6px;">—</div>
<div class="abs c dd" style="left:595px;top:440px;width:42px;height:16px;line-height:16px;text-align:right;padding-right:3px;">—</div>
<div class="abs c dd" style="left:637px;top:440px;width:42px;height:16px;line-height:16px;text-align:right;padding-right:3px;">—</div>
<div class="abs c dd" style="left:679px;top:440px;width:42px;height:16px;line-height:16px;text-align:right;padding-right:3px;">—</div>
<div class="abs c dd" style="left:721px;top:440px;width:42px;height:16px;line-height:16px;text-align:right;padding-right:3px;">—</div>
<div class="abs c dd" style="left:763px;top:440px;width:50px;height:16px;line-height:16px;text-align:right;padding-right:3px;">—</div>
<div class="abs c dd" style="left:813px;top:440px;width:42px;height:16px;line-height:16px;text-align:right;padding-right:3px;">—</div>
<div class="abs c dd" style="left:855px;top:440px;width:42px;height:16px;line-height:16px;text-align:right;padding-right:3px;">—</div>
<div class="abs c dd" style="left:897px;top:440px;width:50px;height:16px;line-height:16px;text-align:right;padding-right:3px;">—</div>
<div class="abs c dd" style="left:947px;top:440px;width:61px;height:16px;line-height:16px;text-align:right;padding-right:7px;">—</div>
</div></div>
<div class="abs" style="left:16px;top:487px;width:992px;height:340px;background:#fff;border-radius:10px;box-shadow:0 0 0 1px rgba(0,0,0,.02),0 1px 2px rgba(0,0,0,.03)"></div>
<div class="abs" id="ctitle" style="left:32px;top:511px;font-size:14.5px;line-height:20px;-webkit-text-stroke:.45px #0f172a;color:#0f172a;white-space:nowrap">Финансовые графики</div>
<div class="abs" style="left:199px;top:507px;width:209px;height:28px;border-radius:8px;background:#f3f4f6"></div>
<div class="abs" style="left:200px;top:509px;width:69px;height:24px;border-radius:6px;background:#fff;box-shadow:0 1px 3px rgba(0,0,0,.10),0 1px 2px rgba(0,0,0,.06)"></div>
<div class="abs med" id="ct1" style="left:210px;top:513px;font-size:12px;line-height:16px;color:#0f172a;white-space:nowrap">Графики</div>
<div class="abs" id="ct2" style="left:281px;top:513px;font-size:12px;line-height:16px;color:#6b7280;white-space:nowrap">Расходы план/факт</div>
<div class="abs" style="left:966px;top:513px;color:#0f172a"><svg class="i" style="width:16px;height:16px;" viewBox="0 0 24 24"><path d="M12.220 2h-.440a2 2 0 0 0-2 2v.180a2 2 0 0 1-1 1.730l-.430.250a2 2 0 0 1-2 0l-.150-.080a2 2 0 0 0-2.730.730l-.220.380a2 2 0 0 0 .730 2.730l.150.100a2 2 0 0 1 1 1.720v.510a2 2 0 0 1-1 1.740l-.150.090a2 2 0 0 0-.730 2.730l.220.380a2 2 0 0 0 2.730.730l.150-.080a2 2 0 0 1 2 0l.430.250a2 2 0 0 1 1 1.730V20a2 2 0 0 0 2 2h.440a2 2 0 0 0 2-2v-.180a2 2 0 0 1 1-1.730l.430-.250a2 2 0 0 1 2 0l.150.080a2 2 0 0 0 2.730-.730l.220-.390a2 2 0 0 0-.730-2.730l-.150-.080a2 2 0 0 1-1-1.740v-.500a2 2 0 0 1 1-1.740l.150-.090a2 2 0 0 0 .730-2.730l-.220-.380a2 2 0 0 0-2.730-.730l-.150.080a2 2 0 0 1-2 0l-.430-.250a2 2 0 0 1-1-1.730V4a2 2 0 0 0-2-2z"/><circle cx="12" cy="12" r="3"/></svg></div>
<svg class="abs" style="left:16px;top:540px;width:992px;height:260px;overflow:hidden" viewBox="272 540 992 260"><text x="339" y="569" text-anchor="end" font-size="12" fill="#9ca3af" font-family="Liberation Sans, sans-serif">120k</text><text x="339" y="634" text-anchor="end" font-size="12" fill="#9ca3af" font-family="Liberation Sans, sans-serif">90k</text><text x="339" y="699" text-anchor="end" font-size="12" fill="#9ca3af" font-family="Liberation Sans, sans-serif">60k</text><text x="339" y="764" text-anchor="end" font-size="12" fill="#9ca3af" font-family="Liberation Sans, sans-serif">30k</text><path d="M578,825 C581.333,825 584.667,565 588,565 C591.333,565 594.667,825 598,825 M888,825 C891.333,825 894.667,565 898,565 C901.333,565 904.667,825 908,825 M1168,825 C1171.333,825 1174.667,565 1178,565 C1181.333,565 1184.667,825 1188,825" fill="none" stroke="#86e0a8" stroke-width="2" stroke-dasharray="5 5" stroke-dashoffset="0"/><path d="M658,565V800M938,565V800" fill="none" stroke="#e5e7eb" stroke-width="1.5" stroke-dasharray="4 4"/><path d="M918,565V800" fill="none" stroke="#b3bccc" stroke-width="2" stroke-dasharray="2 4"/></svg>
<!--/MAIN-->
</div>
</body>
</html>
